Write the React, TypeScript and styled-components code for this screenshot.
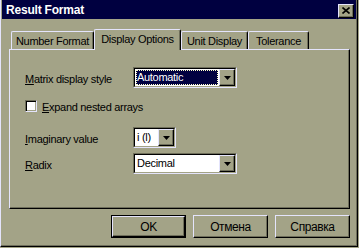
import styled, { createGlobalStyle } from "styled-components";

const face = "#a3a387";
const light = "#e4e4fc";
const shadow = "#6e6e5a";
const dark = "#000000";
const navy = "#000040";

const GlobalStyle = createGlobalStyle`
	body {
		margin: 0;
		background: ${face};
		font-family: "Liberation Sans", Arial, sans-serif;
	}
`;

/* WINDOW */

const Window = styled.div`
	box-sizing: border-box;
	width: 358px;
	height: 247px;
	padding-left: 1px;
	border-left: 1px solid ${light};
	border-right: 1px solid ${dark};
	border-bottom: 1px solid ${dark};
	box-shadow: inset -1px -1px 0 ${shadow};
	background: ${face};
	display: flex;
	flex-direction: column;
`;

const TitleBar = styled.div`
	height: 19px;
	margin-right: 1px;
	background: ${navy};
	display: flex;
	align-items: center;
	justify-content: space-between;
	padding: 0 2px 0 4px;
`;

const Title = styled.span`
	color: #ffffff;
	font-weight: 700;
	font-size: 12px;
	letter-spacing: -0.2px;
	padding-top: 1px;
`;

const CloseButton = styled.div`
	box-sizing: border-box;
	width: 16px;
	height: 14px;
	margin-top: 2px;
	background: ${face};
	border-top: 1px solid ${light};
	border-left: 1px solid ${light};
	border-right: 1px solid ${dark};
	border-bottom: 1px solid ${dark};
	box-shadow: inset -1px -1px 0 ${shadow};
	display: flex;
	align-items: center;
	justify-content: center;
`;

const Body = styled.div`
	padding: 10px 7px 0 7px;
	display: flex;
	flex-direction: column;
`;

/* TABS */

const TabStrip = styled.div`
	display: flex;
	align-items: flex-end;
	height: 20px;
	padding-left: 2px;
	position: relative;
	z-index: 1;
`;

const Tab = styled.div<{ $active?: boolean; $w: number }>`
	box-sizing: border-box;
	width: ${(p) => p.$w}px;
	height: ${(p) => (p.$active ? 21 : 18)}px;
	margin-bottom: ${(p) => (p.$active ? -1 : 0)}px;
	background: ${face};
	border-top: 1px solid ${light};
	border-left: 1px solid ${light};
	border-right: 1px solid ${dark};
	border-radius: 2px 2px 0 0;
	box-shadow: inset -1px 0 0 ${shadow};
	font-size: 11px;
	letter-spacing: -0.3px;
	color: #000;
	display: flex;
	justify-content: center;
	padding-top: 3px;
`;

const Panel = styled.div`
	box-sizing: border-box;
	height: 160px;
	width: 341px;
	border-top: 1px solid ${light};
	border-left: 1px solid ${light};
	border-right: 1px solid ${dark};
	border-bottom: 1px solid ${dark};
	box-shadow: inset -1px -1px 0 ${shadow};
	padding: 17px 0 0 15px;
	display: flex;
	flex-direction: column;
`;

/* FORM ROWS */

const Row = styled.div<{ $top: number }>`
	display: flex;
	align-items: center;
	margin-top: ${(p) => p.$top}px;
	height: 21px;
`;

const Label = styled.span<{ $w?: number }>`
	width: ${(p) => (p.$w ? `${p.$w}px` : "auto")};
	font-size: 11px;
	letter-spacing: -0.3px;
	color: #000;
	white-space: nowrap;
	padding-top: 3px;
`;

const Key = styled.span`
	text-decoration: underline;
`;

const Select = styled.div<{ $w: number }>`
	box-sizing: border-box;
	width: ${(p) => p.$w}px;
	height: 21px;
	border-top: 1px solid ${shadow};
	border-left: 1px solid ${shadow};
	border-right: 1px solid ${light};
	border-bottom: 1px solid ${light};
	display: flex;
`;

const SelectInner = styled.div`
	flex: 1;
	display: flex;
	border-top: 1px solid ${dark};
	border-left: 1px solid ${dark};
	border-right: 1px solid ${face};
	border-bottom: 1px solid ${face};
	background: #ffffff;
`;

const Value = styled.div<{ $focused?: boolean }>`
	flex: 1;
	margin: 1px;
	padding-left: 1px;
	font-size: 11px;
	letter-spacing: -0.3px;
	line-height: 14px;
	color: ${(p) => (p.$focused ? "#ffffff" : "#000000")};
	background: ${(p) => (p.$focused ? navy : "transparent")};
	outline: ${(p) => (p.$focused ? "1px dotted #ffffc8" : "none")};
	outline-offset: -1px;
	white-space: nowrap;
	overflow: hidden;
`;

const DropButton = styled.div`
	box-sizing: border-box;
	width: 16px;
	background: ${face};
	border-top: 1px solid ${light};
	border-left: 1px solid ${light};
	border-right: 1px solid ${dark};
	border-bottom: 1px solid ${dark};
	box-shadow: inset -1px -1px 0 ${shadow};
	display: flex;
	align-items: center;
	justify-content: center;
`;

const CheckRow = styled.div`
	display: flex;
	align-items: center;
	gap: 5px;
	margin-top: 11px;
	height: 13px;
`;

const CheckBox = styled.div`
	box-sizing: border-box;
	width: 12px;
	height: 12px;
	background: #fff;
	border-top: 1px solid ${shadow};
	border-left: 1px solid ${shadow};
	border-right: 1px solid ${light};
	border-bottom: 1px solid ${light};
	box-shadow: inset 1px 1px 0 ${dark}, inset -1px -1px 0 ${face};
`;

/* BUTTONS */

const ButtonRow = styled.div`
	display: flex;
	justify-content: flex-end;
	gap: 7px;
	margin-top: 6px;
	width: 341px;
`;

const Button = styled.div<{ $default?: boolean }>`
	box-sizing: border-box;
	width: 75px;
	height: 23px;
	background: ${face};
	border: 1px solid ${(p) => (p.$default ? dark : "transparent")};
	display: flex;
	font-size: 12px;
	letter-spacing: -0.4px;
	color: #000;
`;

const ButtonFace = styled.div<{ $default?: boolean }>`
	flex: 1;
	display: flex;
	align-items: center;
	justify-content: center;
	padding-top: 1px;
	border-top: 1px solid ${light};
	border-left: 1px solid ${light};
	border-right: 1px solid ${dark};
	border-bottom: 1px solid ${dark};
	box-shadow: inset -1px -1px 0 ${shadow};
	margin: ${(p) => (p.$default ? "0" : "-1px")};
`;

const Arrow = () => (
	<svg width="7" height="4" viewBox="0 0 7 4">
		<polygon points="0,0 7,0 3.5,4" fill="#000" />
	</svg>
);

const CloseIcon = () => (
	<svg width="8" height="7" viewBox="0 0 8 7">
		<path d="M0.5 0.5 L7.5 6.5 M7.5 0.5 L0.5 6.5" stroke="#000" strokeWidth="1.6" />
	</svg>
);

const Combo = ({ w, value, focused }: { w: number; value: string; focused?: boolean }) => (
	<Select $w={w}>
		<SelectInner>
			<Value $focused={focused}>{value}</Value>
			<DropButton>
				<Arrow />
			</DropButton>
		</SelectInner>
	</Select>
);

export default function App() {
	return (
		<>
			<GlobalStyle />
			<Window>
				<TitleBar>
					<Title>Result Format</Title>
					<CloseButton>
						<CloseIcon />
					</CloseButton>
				</TitleBar>
				<Body>
					<TabStrip>
						<Tab $w={83}>Number Format</Tab>
						<Tab $w={87} $active>
							Display Options
						</Tab>
						<Tab $w={67}>Unit Display</Tab>
						<Tab $w={61}>Tolerance</Tab>
					</TabStrip>
					<Panel>
						<Row $top={0}>
							<Label $w={108}>
								<Key>M</Key>atrix display style
							</Label>
							<Combo w={104} value="Automatic" focused />
						</Row>
						<CheckRow>
							<CheckBox />
							<Label>
								<Key>E</Key>xpand nested arrays
							</Label>
						</CheckRow>
						<Row $top={15}>
							<Label $w={108}>
								<Key>I</Key>maginary value
							</Label>
							<Combo w={43} value="i (l)" />
						</Row>
						<Row $top={5}>
							<Label $w={108}>
								<Key>R</Key>adix
							</Label>
							<Combo w={104} value="Decimal" />
						</Row>
					</Panel>
					<ButtonRow>
						<Button $default>
							<ButtonFace $default>OK</ButtonFace>
						</Button>
						<Button>
							<ButtonFace>Отмена</ButtonFace>
						</Button>
						<Button>
							<ButtonFace>Справка</ButtonFace>
						</Button>
					</ButtonRow>
				</Body>
			</Window>
		</>
	);
}
